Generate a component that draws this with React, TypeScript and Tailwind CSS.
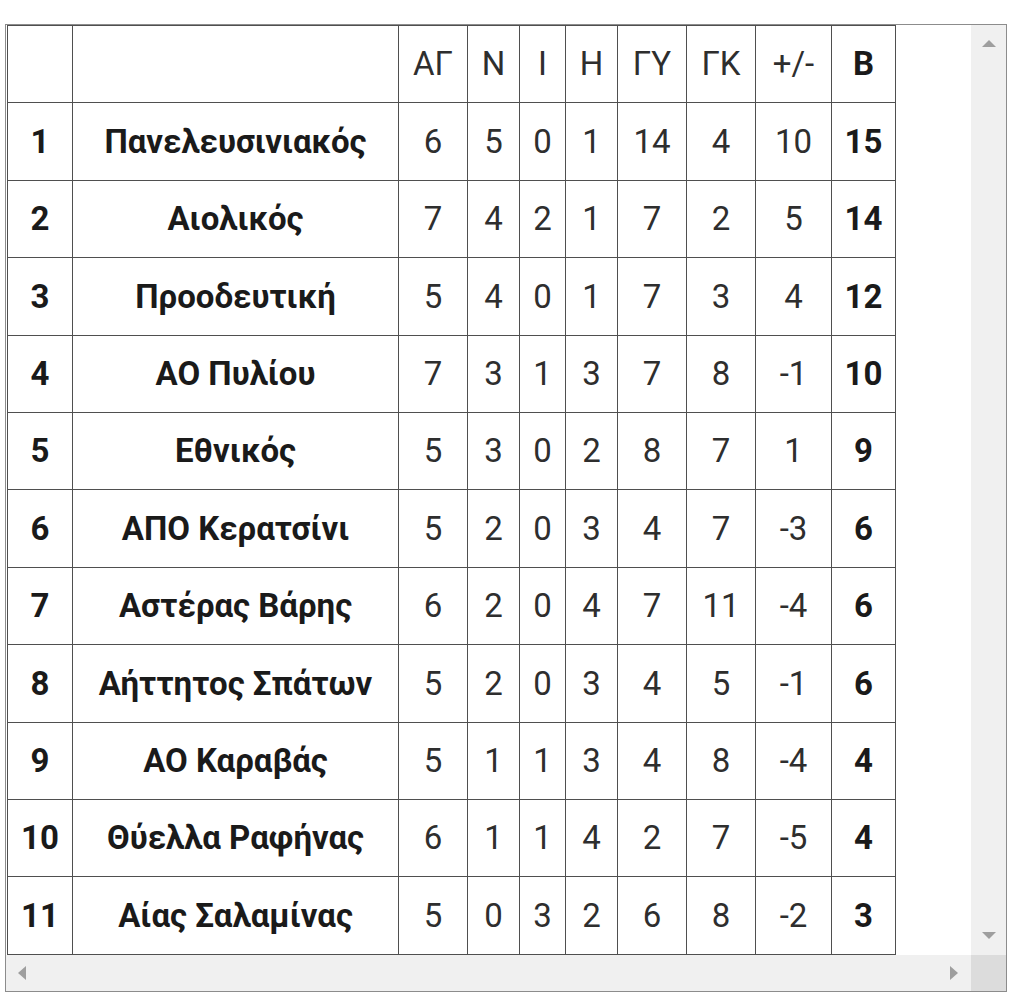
import React from "react";

type Row = {
  pos: number;
  team: string;
  stats: string[];
  points: number;
};

const rows: Row[] = [
  { pos: 1, team: "Πανελευσινιακός", stats: ["6", "5", "0", "1", "14", "4", "10"], points: 15 },
  { pos: 2, team: "Αιολικός", stats: ["7", "4", "2", "1", "7", "2", "5"], points: 14 },
  { pos: 3, team: "Προοδευτική", stats: ["5", "4", "0", "1", "7", "3", "4"], points: 12 },
  { pos: 4, team: "ΑΟ Πυλίου", stats: ["7", "3", "1", "3", "7", "8", "-1"], points: 10 },
  { pos: 5, team: "Εθνικός", stats: ["5", "3", "0", "2", "8", "7", "1"], points: 9 },
  { pos: 6, team: "ΑΠΟ Κερατσίνι", stats: ["5", "2", "0", "3", "4", "7", "-3"], points: 6 },
  { pos: 7, team: "Αστέρας Βάρης", stats: ["6", "2", "0", "4", "7", "11", "-4"], points: 6 },
  { pos: 8, team: "Αήττητος Σπάτων", stats: ["5", "2", "0", "3", "4", "5", "-1"], points: 6 },
  { pos: 9, team: "ΑΟ Καραβάς", stats: ["5", "1", "1", "3", "4", "8", "-4"], points: 4 },
  { pos: 10, team: "Θύελλα Ραφήνας", stats: ["6", "1", "1", "4", "2", "7", "-5"], points: 4 },
  { pos: 11, team: "Αίας Σαλαμίνας", stats: ["5", "0", "3", "2", "6", "8", "-2"], points: 3 },
];

const headers = ["ΑΓ", "Ν", "Ι", "Η", "ΓΥ", "ΓΚ", "+/-"];
const statWidths = ["w-[69px]", "w-[52px]", "w-[46px]", "w-[52px]", "w-[69px]", "w-[69px]", "w-[76px]"];

const cell = "border border-[#4f4f4f] h-[77.4px] p-0 text-center align-middle";

const Arrow = ({ dir }: { dir: "up" | "down" | "left" | "right" }) => {
  const points = {
    up: "0,7 7,0 14,7",
    down: "0,0 14,0 7,7",
    left: "8,0 8,14 0,7",
    right: "0,0 0,14 8,7",
  }[dir];
  const vertical = dir === "up" || dir === "down";
  return (
    <svg
      width={vertical ? 14 : 8}
      height={vertical ? 7 : 14}
      viewBox={vertical ? "0 0 14 7" : "0 0 8 14"}
    >
      <polygon points={points} fill="#9e9e9e" />
    </svg>
  );
};

export default function App() {
  return (
    <div
      className="min-h-[1007px] bg-white pt-[24px] pl-[5px]"
      style={{ fontFamily: "Roboto, 'Noto Sans', sans-serif" }}
    >
      <div className="flex h-[968px] w-[1002px] flex-col border border-[#8c8c8c]">
        <div className="flex h-[930px]">
          <div className="flex-1 bg-white pl-px">
            <table className="border-collapse text-[33px] text-[#2e2e2e]">
              <thead>
                <tr>
                  <th className={`${cell} w-[65px]`}></th>
                  <th className={`${cell} w-[326px]`}></th>
                  {headers.map((h, i) => (
                    <th key={h} className={`${cell} ${statWidths[i]} font-normal`}>
                      {h}
                    </th>
                  ))}
                  <th className={`${cell} w-[64px] font-bold text-[#1a1a1a]`}>Β</th>
                </tr>
              </thead>
              <tbody>
                {rows.map((r) => (
                  <tr key={r.pos}>
                    <td className={`${cell} font-bold text-[#1a1a1a]`}>{r.pos}</td>
                    <td className={`${cell} font-bold text-[#1a1a1a]`}>{r.team}</td>
                    {r.stats.map((s, i) => (
                      <td key={i} className={cell}>
                        {s}
                      </td>
                    ))}
                    <td className={`${cell} font-bold text-[#1a1a1a]`}>{r.points}</td>
                  </tr>
                ))}
              </tbody>
            </table>
          </div>
          <div className="flex w-[35px] flex-col items-center justify-between bg-[#f0f0f0] pt-[15px] pb-[16px]">
            <Arrow dir="up" />
            <Arrow dir="down" />
          </div>
        </div>
        <div className="flex flex-1">
          <div className="flex flex-1 items-center justify-between bg-[#f0f0f0] pl-[12px] pr-[13px]">
            <Arrow dir="left" />
            <Arrow dir="right" />
          </div>
          <div className="w-[35px] bg-[#dcdcdc]"></div>
        </div>
      </div>
    </div>
  );
}
